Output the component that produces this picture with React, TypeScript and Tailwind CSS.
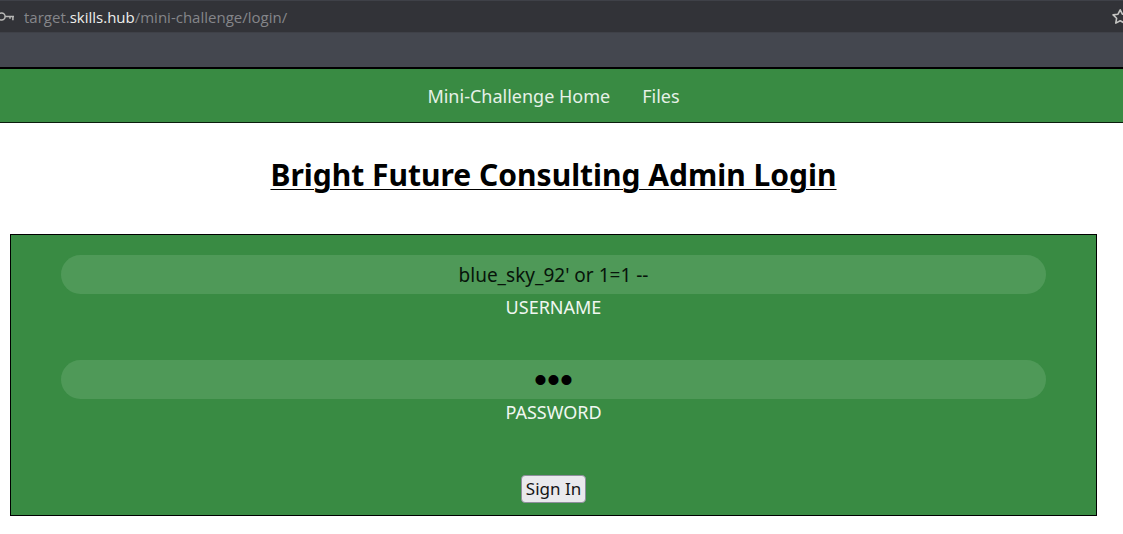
import React from "react";

function KeyIcon() {
  return (
    <svg className="-ml-1 h-4 w-5 shrink-0" viewBox="0 0 20 16" fill="none" stroke="#b9b9b7" strokeWidth="1.5" aria-hidden="true">
      <circle cx="5.6" cy="7.5" r="3.5" />
      <path d="M9.1 7.5H18M16.9 7.5v3.8M14 7.5v2.2" />
    </svg>
  );
}

function StarIcon() {
  return (
    <svg className="-mr-2 h-5 w-5 shrink-0" viewBox="0 0 20 20" fill="none" stroke="#c4c4c2" strokeWidth="1.6" strokeLinejoin="round" aria-hidden="true">
      <path d="M9.2 2.8l2.2 4.4 4.9.7-3.5 3.4.8 4.8-4.4-2.3-4.4 2.3.8-4.8-3.5-3.4 4.9-.7z" />
    </svg>
  );
}

type FieldProps = { id: string; label: string; type: string; value: string; textClass: string };

function Field({ id, label, type, value, textClass }: FieldProps) {
  return (
    <div className="flex flex-col items-center">
      <input
        id={id}
        type={type}
        defaultValue={value}
        className={`h-[39px] w-full rounded-full bg-[#4f9958] px-4 text-center outline-none ${textClass}`}
      />
      <label htmlFor={id} className="text-lg leading-[26px] text-[#f0f7f1]">
        {label}
      </label>
    </div>
  );
}

export default function App() {
  return (
    <div className="min-h-screen overflow-hidden bg-white font-['Noto_Sans',sans-serif] text-black">
      <header className="h-[69px] border-b-2 border-black bg-[#44474f]">
        <div className="flex h-[33px] items-center justify-between border-y border-[#3f4148] bg-[#323338]">
          <div className="flex items-center gap-2">
            <KeyIcon />
            <span className="font-['Open_Sans',sans-serif] text-[15px] leading-5 text-[#85868a]">
              target.<span className="text-[#eeeeec]">skills.hub</span>/mini-challenge/login/
            </span>
          </div>
          <StarIcon />
        </div>
      </header>
      <nav className="flex h-[54px] items-center justify-center gap-8 border-b border-[#0b1c0d] bg-[#398b43] pr-4 text-lg text-[#e6f1e7]">
        <a href="#home">Mini-Challenge Home</a>
        <a href="#files">Files</a>
      </nav>
      <main className="pr-[26px] pl-[10px]">
        <h1 className="pt-7 pb-9 text-center text-3xl leading-[47px] font-bold underline decoration-1 underline-offset-3">
          Bright Future Consulting Admin Login
        </h1>
        <form
          onSubmit={(e) => e.preventDefault()}
          className="flex flex-col gap-10 border border-black bg-[#398b43] px-[50px] pt-5 pb-3"
        >
          <Field id="username" label="USERNAME" type="text" value="blue_sky_92' or 1=1 --" textClass="text-[19px] text-[#07140a]" />
          <Field id="password" label="PASSWORD" type="password" value="abc" textClass="font-['Liberation_Sans',sans-serif] text-[37px] text-black" />
          <button
            type="submit"
            className="mt-2.5 h-7 self-center rounded border border-[#8f8f9d] bg-[#e9e9ed] px-1 text-[17px] leading-6 text-[#151515]"
          >
            Sign In
          </button>
        </form>
      </main>
    </div>
  );
}
